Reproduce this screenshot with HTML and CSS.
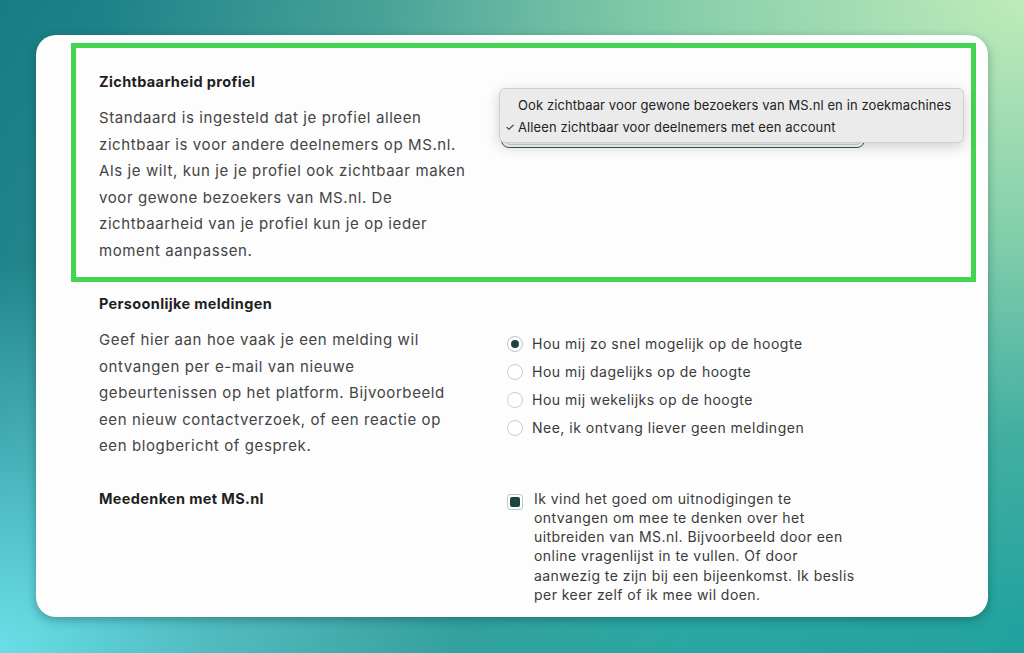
FILE: index.html
```html
<!DOCTYPE html>
<html lang="nl">
<head>
<meta charset="utf-8">
<title>Profielinstellingen</title>
<link rel="stylesheet" href="styles.css">
</head>
<body>
<div class="card">
  <section class="setting highlighted">
    <div class="info">
      <h3 class="title">Zichtbaarheid profiel</h3>
      <p class="desc">Standaard is ingesteld dat je profiel alleen<br>zichtbaar is voor andere deelnemers op MS.nl.<br>Als je wilt, kun je je profiel ook zichtbaar maken<br>voor gewone bezoekers van MS.nl. De<br>zichtbaarheid van je profiel kun je op ieder<br>moment aanpassen.</p>
    </div>
    <div class="control">
      <div class="select">
        <div class="select-inner"></div>
        <div class="menu">
          <div class="menu-item">Ook zichtbaar voor gewone bezoekers van MS.nl en in zoekmachines</div>
          <div class="menu-item checked"><span class="check">✓</span>Alleen zichtbaar voor deelnemers met een account</div>
        </div>
      </div>
    </div>
  </section>

  <section class="setting">
    <div class="info">
      <h3 class="title">Persoonlijke meldingen</h3>
      <p class="desc">Geef hier aan hoe vaak je een melding wil<br>ontvangen per e-mail van nieuwe<br>gebeurtenissen op het platform. Bijvoorbeeld<br>een nieuw contactverzoek, of een reactie op<br>een blogbericht of gesprek.</p>
    </div>
    <div class="control radios">
      <div class="radio-row"><span class="radio on"></span><span class="opt">Hou mij zo snel mogelijk op de hoogte</span></div>
      <div class="radio-row"><span class="radio"></span><span class="opt">Hou mij dagelijks op de hoogte</span></div>
      <div class="radio-row"><span class="radio"></span><span class="opt">Hou mij wekelijks op de hoogte</span></div>
      <div class="radio-row"><span class="radio"></span><span class="opt">Nee, ik ontvang liever geen meldingen</span></div>
    </div>
  </section>

  <section class="setting last">
    <div class="info">
      <h3 class="title">Meedenken met MS.nl</h3>
    </div>
    <div class="control checkrow">
      <span class="checkbox"><span class="checkbox-fill"></span></span>
      <p class="check-text">Ik vind het goed om uitnodigingen te<br>ontvangen om mee te denken over het<br>uitbreiden van MS.nl. Bijvoorbeeld door een<br>online vragenlijst in te vullen. Of door<br>aanwezig te zijn bij een bijeenkomst. Ik beslis<br>per keer zelf of ik mee wil doen.</p>
    </div>
  </section>
</div>
</body>
</html>
```

FILE: styles.css
```css
* { box-sizing: border-box; }

html, body {
  margin: 0;
  height: 653px;
  overflow: hidden;
}

body {
  font-family: "Inter", "Noto Sans", sans-serif;
  background:
    radial-gradient(ellipse 90% 95% at 100% 0%, #bfebb9 0%, rgba(160,220,175,0.8) 35%, rgba(120,195,165,0.35) 70%, rgba(120,195,165,0) 100%),
    radial-gradient(ellipse 45% 60% at 0% 100%, #6adfe7 0%, rgba(100,215,225,0.5) 50%, rgba(90,200,210,0) 100%),
    linear-gradient(120deg, #187c85 0%, #3a9c98 45%, #2aa7a2 75%, #22a29e 100%);
}

.card {
  margin: 35px 36px 0 36px;
  height: 582px;
  background: #fdfdfd;
  border-radius: 20px;
  box-shadow: 0 3px 10px rgba(0, 50, 50, 0.35);
  padding: 8px 12px 0 35px;
}

.setting {
  display: grid;
  grid-template-columns: 361px 1fr;
  column-gap: 41px;
  padding-left: 28px;
}

.setting.highlighted {
  border: 5px solid #43d451;
  padding: 24px 23px 13px 23px;
}

.setting:not(.highlighted) {
  margin-top: 12px;
}

.setting.last {
  margin-top: 29px;
}

.title {
  margin: 0 0 13px 0;
  font-size: 14.5px;
  letter-spacing: 0.35px;
  line-height: 20px;
  font-weight: 700;
  color: #1f1f1f;
}

.desc {
  margin: 0;
  font-size: 15px;
  letter-spacing: 0.6px;
  line-height: 26.5px;
  color: #444;
  white-space: nowrap;
}

.control {
  position: relative;
}

/* select + native popup menu */
.select {
  position: relative;
  margin-top: 38px;
  width: 364px;
  height: 38px;
  border: 1px solid #2f5755;
  border-radius: 8px;
  padding: 2px;
}

.select-inner {
  height: 100%;
  border: 1px solid #d6d6d6;
  border-radius: 6px;
}

.menu {
  position: absolute;
  left: -3px;
  top: -23px;
  width: 465px;
  padding: 5px 0 4px 0;
  background: #ebebeb;
  border: 1px solid #cfcfcf;
  border-radius: 6px;
  box-shadow: 0 4px 14px rgba(0, 0, 0, 0.18);
  font-family: "Inter", "Liberation Sans", sans-serif;
  font-size: 13px;
  letter-spacing: 0.1px;
  color: #222;
}

.menu-item {
  position: relative;
  height: 22px;
  line-height: 22px;
  padding-left: 18px;
  white-space: nowrap;
}

.check {
  position: absolute;
  left: 5px;
  font-size: 11px;
}

/* radios */
.radios {
  padding-top: 35px;
  padding-left: 6px;
}

.radio-row {
  display: flex;
  align-items: center;
  height: 28px;
}

.radio {
  width: 16px;
  height: 16px;
  border-radius: 50%;
  border: 1px solid #c9cfcf;
  background: #fff;
  margin-right: 9px;
  flex: none;
  position: relative;
  top: 1px;
}

.radio.on {
  border-color: #b8c4c3;
}

.radio.on::after {
  content: "";
  position: absolute;
  left: 3px;
  top: 3px;
  width: 8px;
  height: 8px;
  border-radius: 50%;
  background: #1b4644;
}

.opt {
  font-size: 14px;
  letter-spacing: 0.5px;
  color: #3a3a3a;
}

/* checkbox */
.checkrow {
  display: flex;
  align-items: flex-start;
  padding-left: 6px;
}

.checkbox {
  flex: none;
  width: 16px;
  height: 16px;
  margin-top: 5px;
  margin-right: 11px;
  border: 1px solid #bfc8c7;
  border-radius: 3px;
  background: #fff;
  padding: 2px;
}

.checkbox-fill {
  display: block;
  width: 100%;
  height: 100%;
  background: #1b4644;
  border-radius: 2px;
}

.check-text {
  margin: 0;
  font-size: 14px;
  letter-spacing: 0.45px;
  line-height: 19.3px;
  color: #3a3a3a;
  white-space: nowrap;
}
```
